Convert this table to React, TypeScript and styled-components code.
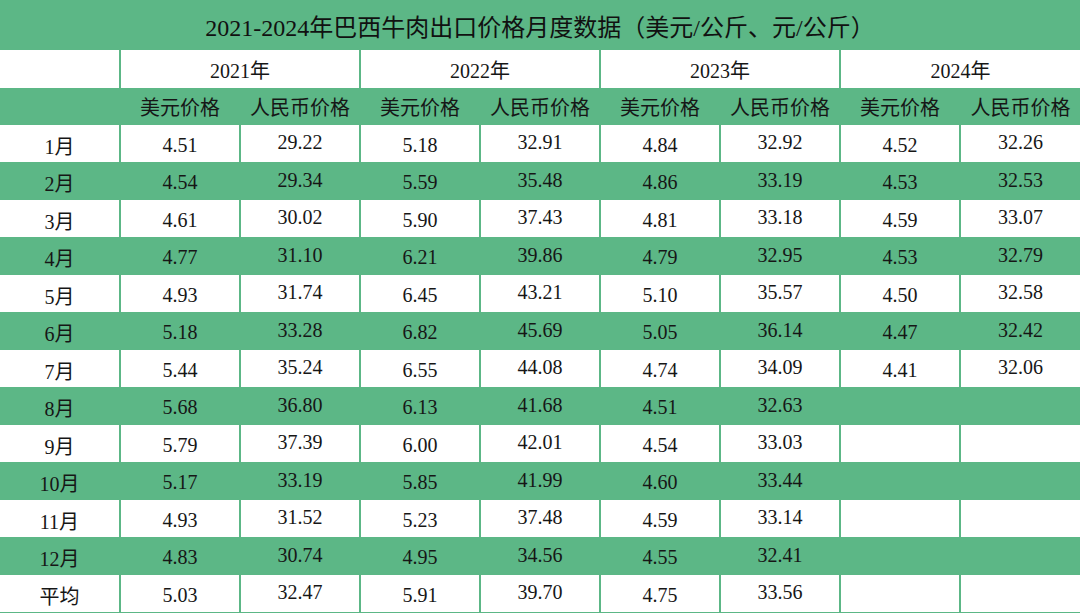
import React from "react"
import styled, { createGlobalStyle } from "styled-components"

const GREEN = "#5cb786"

const GlobalStyle = createGlobalStyle`
  html, body {
    margin: 0;
    padding: 0;
    background: #ffffff;
  }
  body {
    font-family: "Liberation Serif", "Noto Sans CJK SC", serif;
    color: #161616;
  }
`

const Table = styled.div`
  width: 1080px;
  display: flex;
  flex-direction: column;
  background: ${GREEN};
  padding-bottom: 1px;
`

const Title = styled.div`
  height: 50px;
  display: flex;
  align-items: center;
  justify-content: center;
  font-size: 24px;
  color: #111;
  background: ${GREEN};
`

const Row = styled.div<{ $h: number }>`
  height: ${(p) => p.$h}px;
  display: grid;
  grid-template-columns: repeat(9, 120px);
`

// $shift moves the text down (positive) or up (negative) inside the cell
const Cell = styled.div<{ $white?: boolean; $span?: number; $shift?: number }>`
  box-sizing: border-box;
  grid-column: span ${(p) => p.$span ?? 1};
  display: flex;
  align-items: center;
  justify-content: center;
  font-size: 20px;
  background: ${(p) => (p.$white ? "#ffffff" : GREEN)};
  border-left: 1px solid ${GREEN};
  border-right: 1px solid ${GREEN};
  padding-top: ${(p) => Math.max(0, (p.$shift ?? 0) * 2)}px;
  padding-bottom: ${(p) => Math.max(0, -(p.$shift ?? 0) * 2)}px;
  &:first-child {
    border-left: none;
  }
  &:last-child {
    border-right: none;
  }
`

type Pair = [string, string]

const data: { month: string; values: Pair[] }[] = [
  { month: "1月", values: [["4.51", "29.22"], ["5.18", "32.91"], ["4.84", "32.92"], ["4.52", "32.26"]] },
  { month: "2月", values: [["4.54", "29.34"], ["5.59", "35.48"], ["4.86", "33.19"], ["4.53", "32.53"]] },
  { month: "3月", values: [["4.61", "30.02"], ["5.90", "37.43"], ["4.81", "33.18"], ["4.59", "33.07"]] },
  { month: "4月", values: [["4.77", "31.10"], ["6.21", "39.86"], ["4.79", "32.95"], ["4.53", "32.79"]] },
  { month: "5月", values: [["4.93", "31.74"], ["6.45", "43.21"], ["5.10", "35.57"], ["4.50", "32.58"]] },
  { month: "6月", values: [["5.18", "33.28"], ["6.82", "45.69"], ["5.05", "36.14"], ["4.47", "32.42"]] },
  { month: "7月", values: [["5.44", "35.24"], ["6.55", "44.08"], ["4.74", "34.09"], ["4.41", "32.06"]] },
  { month: "8月", values: [["5.68", "36.80"], ["6.13", "41.68"], ["4.51", "32.63"], ["", ""]] },
  { month: "9月", values: [["5.79", "37.39"], ["6.00", "42.01"], ["4.54", "33.03"], ["", ""]] },
  { month: "10月", values: [["5.17", "33.19"], ["5.85", "41.99"], ["4.60", "33.44"], ["", ""]] },
  { month: "11月", values: [["4.93", "31.52"], ["5.23", "37.48"], ["4.59", "33.14"], ["", ""]] },
  { month: "12月", values: [["4.83", "30.74"], ["4.95", "34.56"], ["4.55", "32.41"], ["", ""]] },
  { month: "平均", values: [["5.03", "32.47"], ["5.91", "39.70"], ["4.75", "33.56"], ["", ""]] },
]

const years = ["2021年", "2022年", "2023年", "2024年"]

export default function App() {
  return (
    <>
      <GlobalStyle />
      <Table>
        <Title>2021-2024年巴西牛肉出口价格月度数据（美元/公斤、元/公斤）</Title>

        <Row $h={38}>
          <Cell $white />
          {years.map((y) => (
            <Cell key={y} $white $span={2}>
              {y}
            </Cell>
          ))}
        </Row>

        <Row $h={37}>
          <Cell />
          {years.map((y) => (
            <React.Fragment key={y}>
              <Cell>美元价格</Cell>
              <Cell>人民币价格</Cell>
            </React.Fragment>
          ))}
        </Row>

        {data.map((row, i) => {
          const white = i % 2 === 0
          return (
            <Row key={row.month} $h={white ? 37 : 38}>
              <Cell $white={white} $shift={1.5}>
                {row.month}
              </Cell>
              {row.values.map(([usd, rmb], j) => (
                <React.Fragment key={j}>
                  <Cell $white={white} $shift={1.5}>
                    {usd}
                  </Cell>
                  <Cell $white={white} $shift={-1}>
                    {rmb}
                  </Cell>
                </React.Fragment>
              ))}
            </Row>
          )
        })}
      </Table>
    </>
  )
}
